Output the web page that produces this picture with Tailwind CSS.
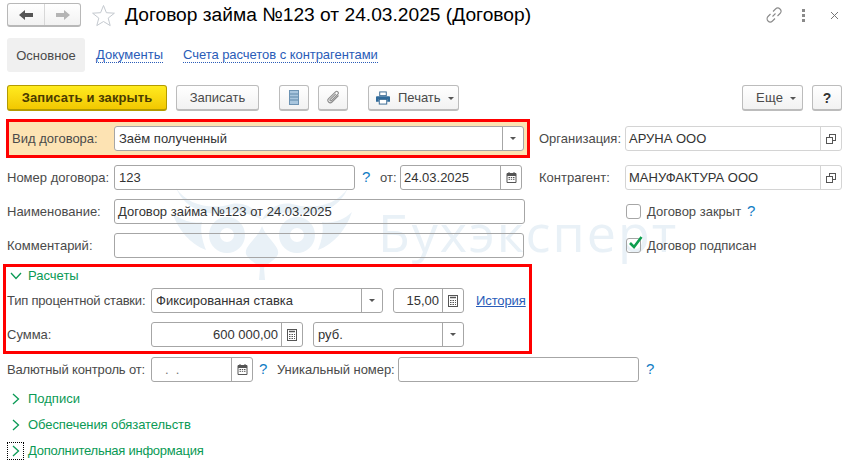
<!DOCTYPE html>
<html lang="ru">
<head>
<meta charset="utf-8">
<title>Договор займа</title>
<script src="https://cdn.jsdelivr.net/npm/@tailwindcss/browser@4"></script>
</head>
<body class="bg-white">
<div class="relative w-[849px] h-[464px] overflow-hidden font-['Liberation_Sans',Arial,sans-serif] text-[13px] text-[#4a4a4a]">

  <!-- watermark -->
  <div class="absolute left-[170px] top-[180px] flex items-start">
    <svg width="190" height="105" viewBox="0 0 190 105" fill="#e9f1f7">
      <g>
        <path d="M6 8 C18 26 42 30 62 24 C74 22 86 28 92 40 C82 34 72 32 60 33 C36 36 16 30 6 8Z"/>
        <path d="M2 32 C8 50 20 64 36 70 C32 60 30 50 32 42 C22 44 10 40 2 32Z"/>
        <path fill-rule="evenodd" d="M57 37 A18 18 0 1 0 57 73 A18 18 0 1 0 57 37 Z M57 48 A7 7 0 1 1 57 62 A7 7 0 1 1 57 48 Z"/>
      </g>
      <g transform="matrix(-1 0 0 1 184 0)">
        <path d="M6 8 C18 26 42 30 62 24 C74 22 86 28 92 40 C82 34 72 32 60 33 C36 36 16 30 6 8Z"/>
        <path d="M2 32 C8 50 20 64 36 70 C32 60 30 50 32 42 C22 44 10 40 2 32Z"/>
        <path fill-rule="evenodd" d="M57 37 A18 18 0 1 0 57 73 A18 18 0 1 0 57 37 Z M57 48 A7 7 0 1 1 57 62 A7 7 0 1 1 57 48 Z"/>
      </g>
      <path d="M92 46 C96 58 110 66 108 74 C106 80 96 84 94 88 L95 100 L89 100 L90 88 C88 84 78 80 76 74 C74 66 88 58 92 46Z"/>
    </svg>
  </div>
  <div class="absolute left-[378px] top-[202px] font-['Open_Sans',sans-serif] text-[52px] leading-[60px] tracking-[2px] text-[#e9f1f7]">Бухэксперт</div>

  <div class="relative">
    <!-- title bar -->
    <div class="flex items-center h-[24px] mt-[3px] pl-[7px] pr-[7px]">
      <div class="flex w-[74px] h-[24px] rounded-[3px] border border-[#b8b8b8] border-b-2 bg-gradient-to-b from-white to-[#f2f2f2]">
        <div class="w-[37px] flex items-center justify-center border-r border-[#d8d8d8]">
          <svg width="16" height="12" viewBox="0 0 16 12"><path d="M1 6 L7 1 V4 H15 V8 H7 V11 Z" fill="#555"/></svg>
        </div>
        <div class="flex-1 flex items-center justify-center">
          <svg width="16" height="12" viewBox="0 0 16 12"><path d="M15 6 L9 1 V4 H1 V8 H9 V11 Z" fill="#b5b5b5"/></svg>
        </div>
      </div>
      <svg class="ml-[10px]" width="25" height="23" viewBox="0 0 25 23"><path d="M12.5 1.5 L15.4 8.7 L23.4 9.2 L17.2 14.1 L19.2 21.6 L12.5 17.5 L5.8 21.6 L7.8 14.1 L1.6 9.2 L9.6 8.7 Z" fill="#fff" stroke="#c4c9cf" stroke-width="1"/></svg>
      <div class="ml-[9px] text-[19.2px] leading-[24px] text-black whitespace-nowrap">Договор займа №123 от 24.03.2025 (Договор)</div>
      <svg class="ml-auto" width="16" height="16" viewBox="0 0 16 16" fill="none" stroke="#8a8a8a" stroke-width="1.1"><path d="M6.5 9.5 L9.5 6.5"/><path d="M7 4.5 L9.5 2 a3 3 0 0 1 4.5 4.5 L11.5 9"/><path d="M9 11.5 L6.5 14 a3 3 0 0 1 -4.5 -4.5 L4.5 7"/></svg>
      <div class="ml-[20px] flex flex-col gap-[2px]">
        <div class="w-[3px] h-[3px] bg-[#8a8a8a]"></div>
        <div class="w-[3px] h-[3px] bg-[#8a8a8a]"></div>
        <div class="w-[3px] h-[3px] bg-[#8a8a8a]"></div>
      </div>
      <svg class="ml-[25px] mr-[3px]" width="9" height="9" viewBox="0 0 9 9" stroke="#777" stroke-width="1"><path d="M1 1 L8 8 M8 1 L1 8"/></svg>
    </div>

    <!-- tabs -->
    <div class="flex items-center mt-[11px] ml-[7px] h-[34px]">
      <div class="h-[34px] w-[78px] pt-[1px] flex items-center justify-center bg-[#f0f0f0] rounded-[3px]">Основное</div>
      <span class="ml-[11px] text-[#2a5cb8] border-b border-dotted border-[#2a5cb8] leading-[14px]">Документы</span>
      <span class="ml-[20px] text-[#2a5cb8] border-b border-dotted border-[#2a5cb8] leading-[14px] tracking-[-0.05px]">Счета расчетов с контрагентами</span>
    </div>

    <!-- command bar -->
    <div class="flex items-center mt-[13px] mx-[7px] h-[26px]">
      <div class="w-[160px] h-[26px] pt-[1px] flex items-center justify-center rounded-[3px] border border-[#b39b00] border-b-2 bg-gradient-to-b from-[#ffeb1e] to-[#f2c800] font-bold text-[#4a3c00] tracking-[0.1px]">Записать и закрыть</div>
      <div class="ml-[9px] w-[83px] h-[26px] pt-[1px] flex items-center justify-center rounded-[3px] border border-[#bcbcbc] border-b-2 bg-gradient-to-b from-white to-[#f2f2f2]">Записать</div>
      <div class="ml-[20px] w-[30px] h-[26px] flex items-center justify-center rounded-[3px] border border-[#bcbcbc] border-b-2 bg-gradient-to-b from-white to-[#f2f2f2]">
        <svg width="10" height="15" viewBox="0 0 10 15"><rect x="0.5" y="0.5" width="9" height="14" fill="#a9c6de" stroke="#6d93b3"/><path d="M1 4 H9 M1 7 H9 M1 10 H9" stroke="#5f87a8"/></svg>
      </div>
      <div class="ml-[9px] w-[30px] h-[26px] flex items-center justify-center rounded-[3px] border border-[#bcbcbc] border-b-2 bg-gradient-to-b from-white to-[#f2f2f2]">
        <svg width="15" height="15" viewBox="0 0 15 15" fill="none" stroke="#8c8c8c" stroke-width="1.1"><path d="M12.5 5.5 L6 12 a2.4 2.4 0 0 1 -3.4 -3.4 L9.5 1.8 a1.7 1.7 0 0 1 2.4 2.4 L5.4 10.6 a0.8 0.8 0 0 1 -1.2 -1.2 L9.8 3.8"/></svg>
      </div>
      <div class="ml-[20px] w-[91px] h-[26px] pt-[1px] flex items-center pl-[7px] rounded-[3px] border border-[#bcbcbc] border-b-2 bg-gradient-to-b from-white to-[#f2f2f2]">
        <svg width="14" height="14" viewBox="0 0 15 14"><rect x="4" y="0.5" width="7" height="4" fill="#fff" stroke="#33658f"/><path d="M1 5 H14 A1 1 0 0 1 15 6 V11 H12 V8 H3 V11 H0 V6 A1 1 0 0 1 1 5 Z" fill="#2f6a9a"/><rect x="3.5" y="8.5" width="8" height="5" fill="#fff" stroke="#33658f"/></svg>
        <span class="ml-[8px]">Печать</span>
        <div class="ml-[7px] w-0 h-0 border-x-[3px] border-x-transparent border-t-[3px] border-t-[#555]"></div>
      </div>
      <div class="ml-auto w-[61px] h-[26px] pt-[1px] flex items-center pl-[13px] rounded-[3px] border border-[#bcbcbc] border-b-2 bg-gradient-to-b from-white to-[#f2f2f2]">
        <span class="tracking-[0.3px]">Еще</span>
        <div class="ml-[7px] w-0 h-0 border-x-[3px] border-x-transparent border-t-[3px] border-t-[#555]"></div>
      </div>
      <div class="ml-[9px] w-[30px] h-[26px] pt-[1px] flex items-center justify-center rounded-[3px] border border-[#bcbcbc] border-b-2 bg-gradient-to-b from-white to-[#f2f2f2] font-bold text-[14px] text-[#333]">?</div>
    </div>

    <!-- form top: left column + right column -->
    <div class="flex mt-[8px]">
      <div class="w-[533px] shrink-0">
        <!-- highlighted row -->
        <div class="ml-[6px] w-[524px] h-[39px] border-[3px] border-[#ff0000] bg-[#fde3b3] flex items-center pl-[3px]">
          <span class="w-[102px]">Вид договора:</span>
          <div class="w-[410px] h-[25px] flex rounded-[3px] border border-[#a6a6a6] bg-white items-center">
            <span class="flex-1 pl-[4px] text-[#333]">Заём полученный</span>
            <div class="w-[21px] h-full border-l border-[#a6a6a6] flex items-center justify-center"><div class="w-0 h-0 border-x-[3px] border-x-transparent border-t-[3px] border-t-[#555]"></div></div>
          </div>
        </div>
        <!-- number -->
        <div class="flex items-center mt-[7px] pl-[7px] h-[25px]">
          <span class="w-[107px]">Номер договора:</span>
          <div class="w-[241px] h-[25px] rounded-[3px] border border-[#a6a6a6] flex items-center pl-[4px] text-[#333]">123</div>
          <span class="ml-[7px] w-[12px] text-[#0f7cc4] text-[15px]">?</span>
          <span class="ml-[6px] w-[19px]">от:</span>
          <div class="w-[122px] ml-[1px] h-[25px] rounded-[3px] border border-[#a6a6a6] flex items-center">
            <span class="flex-1 pl-[3px] text-[#333]">24.03.2025</span>
            <div class="w-[21px] h-full border-l border-[#a6a6a6] flex items-center justify-center">
              <svg width="11" height="11" viewBox="0 0 11 11"><path d="M1 1.5 H10 V10.5 H1 Z" fill="#fff" stroke="#555"/><path d="M1 1 H10 V4 H1 Z" fill="#555"/><path d="M3 0 V2 M8 0 V2" stroke="#555"/><path d="M2.5 5.5 H4 M4.8 5.5 H6.2 M7 5.5 H8.5 M2.5 7.3 H4 M4.8 7.3 H6.2 M7 7.3 H8.5" stroke="#555"/></svg>
            </div>
          </div>
        </div>
        <!-- name -->
        <div class="flex items-center mt-[9px] pl-[7px] h-[25px]">
          <span class="w-[107px]">Наименование:</span>
          <div class="w-[411px] h-[25px] rounded-[3px] border border-[#a6a6a6] flex items-center pl-[3px] text-[#333]">Договор займа №123 от 24.03.2025</div>
        </div>
        <!-- comment -->
        <div class="flex items-center mt-[9px] pl-[7px] h-[25px]">
          <span class="w-[107px]">Комментарий:</span>
          <div class="w-[410px] h-[25px] rounded-[3px] border border-[#a6a6a6]"></div>
        </div>
      </div>

      <div class="w-[316px] pt-[7px]">
        <div class="flex items-center h-[25px] ml-[6px]">
          <span class="w-[86px]">Организация:</span>
          <div class="w-[217px] h-[25px] rounded-[3px] border border-[#d4d4d4] flex items-center">
            <span class="flex-1 pl-[3px] text-[#333]">АРУНА ООО</span>
            <div class="w-[21px] h-full border-l border-[#d4d4d4] flex items-center justify-center">
              <svg width="10" height="10" viewBox="0 0 10 10" fill="#fff" stroke="#555"><rect x="3.5" y="0.5" width="6" height="6"/><rect x="0.5" y="3.5" width="6" height="6"/></svg>
            </div>
          </div>
        </div>
        <div class="flex items-center h-[25px] ml-[6px] mt-[14px]">
          <span class="w-[86px]">Контрагент:</span>
          <div class="w-[217px] h-[25px] rounded-[3px] border border-[#d4d4d4] flex items-center">
            <span class="flex-1 pl-[3px] text-[#333]">МАНУФАКТУРА ООО</span>
            <div class="w-[21px] h-full border-l border-[#d4d4d4] flex items-center justify-center">
              <svg width="10" height="10" viewBox="0 0 10 10" fill="#fff" stroke="#555"><rect x="3.5" y="0.5" width="6" height="6"/><rect x="0.5" y="3.5" width="6" height="6"/></svg>
            </div>
          </div>
        </div>
        <div class="flex items-center h-[25px] ml-[93px] mt-[9px]">
          <div class="w-[15px] h-[15px] rounded-[3px] border border-[#a6a6a6]"></div>
          <span class="ml-[6px]">Договор закрыт</span>
          <span class="ml-[6px] text-[#0f7cc4] text-[15px]">?</span>
        </div>
        <div class="flex items-center h-[25px] ml-[93px] mt-[9px]">
          <div class="relative w-[15px] h-[15px] rounded-[3px] border border-[#a6a6a6]">
            <svg class="absolute left-[1px] -top-[4px]" width="15" height="15" viewBox="0 0 15 15" fill="none" stroke="#0d9e4f" stroke-width="2.6"><path d="M2 8 L6 12 L13.5 2"/></svg>
          </div>
          <span class="ml-[6px]">Договор подписан</span>
        </div>
      </div>
    </div>

    <!-- Расчеты -->
    <div class="mt-[6px] ml-[3px] w-[529px] h-[90px] border-[3px] border-[#ff0000] pl-[2px]">
      <div class="flex items-center h-[18px]">
        <svg class="ml-[2px]" width="12" height="8" viewBox="0 0 12 8" fill="none" stroke="#0a9a55" stroke-width="1.3"><path d="M1 1 L6 6.5 L11 1"/></svg>
        <span class="ml-[6px] text-[#0a9a55]">Расчеты</span>
      </div>
      <div class="flex items-center h-[25px] mt-[3px] -ml-[1px]">
        <span class="w-[144px] whitespace-nowrap tracking-[-0.2px]">Тип процентной ставки:</span>
        <div class="w-[232px] h-[25px] rounded-[3px] border border-[#a6a6a6] flex items-center">
          <span class="flex-1 pl-[4px] text-[#333]">Фиксированная ставка</span>
          <div class="w-[21px] h-full border-l border-[#a6a6a6] flex items-center justify-center"><div class="w-0 h-0 border-x-[3px] border-x-transparent border-t-[3px] border-t-[#555]"></div></div>
        </div>
        <div class="ml-[10px] w-[71px] h-[25px] rounded-[3px] border border-[#a6a6a6] flex items-center">
          <span class="flex-1 text-right pr-[3px] text-[#333]">15,00</span>
          <div class="w-[21px] h-full border-l border-[#a6a6a6] flex items-center justify-center">
            <svg width="10" height="12" viewBox="0 0 10 12"><rect x="0.5" y="0.5" width="9" height="11" fill="#fff" stroke="#555"/><path d="M2 2.5 H8" stroke="#555" stroke-width="1.5"/><path d="M2 5.5 H3.5 M4.5 5.5 H6 M7 5.5 H8 M2 7.5 H3.5 M4.5 7.5 H6 M7 7.5 H8 M2 9.5 H3.5 M4.5 9.5 H6 M7 9.5 H8" stroke="#555"/></svg>
          </div>
        </div>
        <span class="ml-[12px] text-[#2a5cb8] underline tracking-[-0.1px]">История</span>
      </div>
      <div class="flex items-center h-[25px] mt-[9px] -ml-[1px]">
        <span class="w-[144px]">Сумма:</span>
        <div class="w-[152px] h-[25px] rounded-[3px] border border-[#a6a6a6] flex items-center">
          <span class="flex-1 text-right pr-[3px] text-[#333]">600 000,00</span>
          <div class="w-[21px] h-full border-l border-[#a6a6a6] flex items-center justify-center">
            <svg width="10" height="12" viewBox="0 0 10 12"><rect x="0.5" y="0.5" width="9" height="11" fill="#fff" stroke="#555"/><path d="M2 2.5 H8" stroke="#555" stroke-width="1.5"/><path d="M2 5.5 H3.5 M4.5 5.5 H6 M7 5.5 H8 M2 7.5 H3.5 M4.5 7.5 H6 M7 7.5 H8 M2 9.5 H3.5 M4.5 9.5 H6 M7 9.5 H8" stroke="#555"/></svg>
          </div>
        </div>
        <div class="ml-[10px] w-[151px] h-[25px] rounded-[3px] border border-[#a6a6a6] flex items-center">
          <span class="flex-1 pl-[4px] text-[#333]">руб.</span>
          <div class="w-[21px] h-full border-l border-[#a6a6a6] flex items-center justify-center"><div class="w-0 h-0 border-x-[3px] border-x-transparent border-t-[3px] border-t-[#555]"></div></div>
        </div>
      </div>
    </div>

    <!-- currency control -->
    <div class="flex items-center h-[25px] mt-[3px] ml-[7px]">
      <span class="w-[144px] whitespace-nowrap tracking-[-0.15px]">Валютный контроль от:</span>
      <div class="w-[102px] h-[25px] rounded-[3px] border border-[#a6a6a6] flex items-center">
        <span class="flex-1 pl-[13px] text-[#777]">.&nbsp;&nbsp;.</span>
        <div class="w-[21px] h-full border-l border-[#a6a6a6] flex items-center justify-center">
          <svg width="11" height="11" viewBox="0 0 11 11"><path d="M1 1.5 H10 V10.5 H1 Z" fill="#fff" stroke="#555"/><path d="M1 1 H10 V4 H1 Z" fill="#555"/><path d="M3 0 V2 M8 0 V2" stroke="#555"/><path d="M2.5 5.5 H4 M4.8 5.5 H6.2 M7 5.5 H8.5 M2.5 7.3 H4 M4.8 7.3 H6.2 M7 7.3 H8.5" stroke="#555"/></svg>
        </div>
      </div>
      <span class="ml-[6px] w-[12px] text-[#0f7cc4] text-[15px]">?</span>
      <span class="ml-[6px] w-[121px] whitespace-nowrap tracking-[-0.05px]">Уникальный номер:</span>
      <div class="w-[241px] h-[25px] rounded-[3px] border border-[#a6a6a6]"></div>
      <span class="ml-[7px] text-[#0f7cc4] text-[15px]">?</span>
    </div>

    <!-- collapsed groups -->
    <div class="flex items-center h-[18px] mt-[8px] ml-[12px]">
      <svg width="8" height="12" viewBox="0 0 8 12" fill="none" stroke="#0a9a55" stroke-width="1.3"><path d="M1 1 L6.5 6 L1 11"/></svg>
      <span class="ml-[8px] text-[#0a9a55]">Подписи</span>
    </div>
    <div class="flex items-center h-[18px] mt-[8px] ml-[12px]">
      <svg width="8" height="12" viewBox="0 0 8 12" fill="none" stroke="#0a9a55" stroke-width="1.3"><path d="M1 1 L6.5 6 L1 11"/></svg>
      <span class="ml-[8px] text-[#0a9a55] tracking-[-0.08px]">Обеспечения обязательств</span>
    </div>
    <div class="flex items-center h-[18px] mt-[8px] ml-[7px]">
      <div class="w-[17px] h-[18px] border border-dotted border-black flex items-center justify-center">
        <svg width="8" height="12" viewBox="0 0 8 12" fill="none" stroke="#0a9a55" stroke-width="1.3"><path d="M1 1 L6.5 6 L1 11"/></svg>
      </div>
      <span class="ml-[4px] text-[#0a9a55] tracking-[-0.25px]">Дополнительная информация</span>
    </div>
  </div>
</div>
</body>
</html>
